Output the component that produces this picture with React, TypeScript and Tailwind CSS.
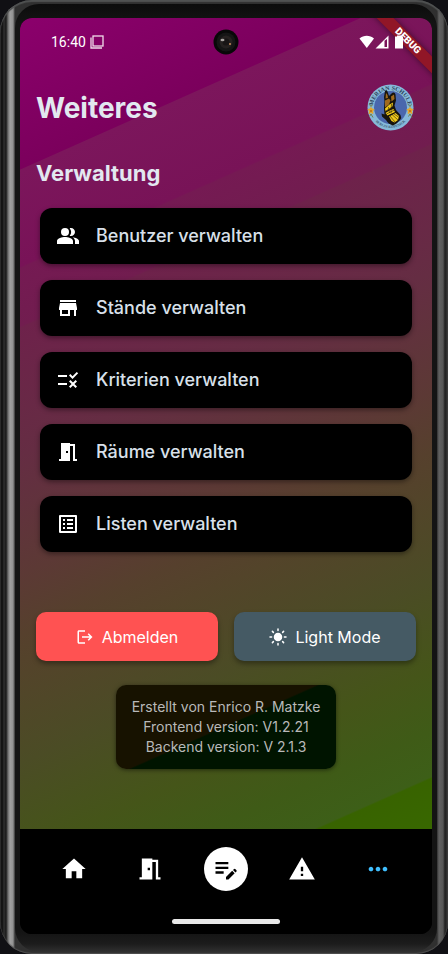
import type { ReactNode } from "react";
import {
  MdEditNote,
  MdHome,
  MdListAlt,
  MdLogout,
  MdMeetingRoom,
  MdMoreHoriz,
  MdPeopleAlt,
  MdRule,
  MdStore,
  MdWarning,
} from "react-icons/md";

const adminEntries: { label: string; icon: ReactNode }[] = [
  { label: "Benutzer verwalten", icon: <MdPeopleAlt size={24} /> },
  { label: "Stände verwalten", icon: <MdStore size={24} /> },
  { label: "Kriterien verwalten", icon: <MdRule size={24} /> },
  { label: "Räume verwalten", icon: <MdMeetingRoom size={24} /> },
  { label: "Listen verwalten", icon: <MdListAlt size={24} /> },
];

function StatusBar() {
  return (
    <div className="relative z-10 grid h-12 grid-cols-3 items-center">
      <div className="flex items-center gap-1 pl-[31px] font-['Roboto',sans-serif] text-sm text-white">
        <span>16:40</span>
        <svg width="14" height="14" viewBox="0 0 14 14" fill="none" stroke="#f0dcea" aria-hidden="true">
          <rect x="3" y="1" width="10" height="10" strokeWidth="1.3" />
          <path d="M1 2.5V13H12" strokeWidth="1.3" />
        </svg>
      </div>
      <svg className="justify-self-center" width="26" height="26" viewBox="0 0 26 26" aria-hidden="true">
        <circle cx="13" cy="13" r="12.5" fill="#080808" />
        <circle cx="13" cy="13" r="9.5" fill="#151515" />
        <circle cx="13" cy="13" r="6.5" fill="#252120" />
        <circle cx="13" cy="13" r="3.5" fill="#181515" />
        <ellipse cx="9.5" cy="11" rx="2" ry="1.2" fill="#a9a5a2" />
        <circle cx="17" cy="15" r="1" fill="#c58d5b" />
      </svg>
      <svg className="mr-7 justify-self-end" width="45" height="16" viewBox="0 0 45 16" fill="#fff" aria-hidden="true">
        <path d="M.5 4.5C4.7.9 10.8.9 15 4.5L7.8 14z" />
        <path d="M16.5 14.5 29.5 1.5v13z M25.5 6.8v6.2h2.5V5z" fillRule="evenodd" />
        <path d="M36 2.5h2V1.500h4v1h2v12h-8z" />
      </svg>
    </div>
  );
}

function DebugRibbon() {
  return (
    <div className="absolute -right-6 top-[17px] flex h-3 w-24 rotate-45 items-center justify-center bg-[#911627] font-['Roboto',sans-serif] text-[10px] font-black leading-3 text-white shadow-[0_0_6px_rgba(0,0,0,0.5)]">
      DEBUG
    </div>
  );
}

function SchoolLogo() {
  return (
    <svg className="mr-0.5" width="47" height="47" viewBox="0 0 94 94" role="img" aria-label="Merian Schule">
      <defs>
        <path id="logo-top" d="M12 47a35 35 0 0 1 70 0" />
        <path id="logo-bottom" d="M6 47a41 41 0 0 0 82 0" />
      </defs>
      <circle cx="47" cy="47" r="46" fill="#86b9d9" />
      <circle cx="47" cy="47" r="33" fill="#4a67ad" />
      <text fontFamily="Liberation Serif, serif" fontSize="12" fontWeight="700" fill="#2c4358" textAnchor="middle">
        <textPath href="#logo-top" startOffset="50%">MERIAN SCHULE</textPath>
      </text>
      <text fontFamily="Liberation Serif, serif" fontSize="7" fontWeight="700" fill="#3c5a72" textAnchor="middle">
        <textPath href="#logo-bottom" startOffset="50%">BERLIN-KÖPENICK</textPath>
      </text>
      {[8, 86].map((x) => (
        <g key={x}>
          <path d={`M${x - 3} 41l3 4 3-4M${x - 3} 65l3-5 4 7`} stroke="#6f7f49" strokeWidth="2" fill="none" />
          <path d={`M${x} 47l2 3 4 1-3 3 1 5-4-2-4 2 1-5-3-3 4-1z`} fill="#e7a528" stroke="#e7a528" strokeWidth="2" />
          <circle cx={x} cy="54" r="2" fill="#b56a16" />
        </g>
      ))}
      <path d="M36 14q3-3 5 1l3 9 4-4q7-6 9 1l1 12-3 10 3 9 9 10q3 5-1 10l-7 7-7 4q-10-3-14-11l-8-7-1-6 6 2-1-12 1-14-1-9z" fill="#17140d" />
      <path d="M38 18l3 4 1 6-5 1zM36 33l8-4 3 4-3 8-8 6zM48 25l6-4 1 9-6 5z" fill="#a06a1e" />
      <path d="M36 49l9-8 7-4-1 8-6 5-8 5zM37 58l8-5 8-3 3 6-9 4-6 3zM44 65l6-3 7-4 7 6-2 8-7 5-6-3z" fill="#f0c91b" />
      <path d="M36 55l16-10M39 60l16-8M46 64l10 12M50 61l12 11M43 46l2 12M49 40l-1 18M54 60l9 6" stroke="#27200b" strokeWidth="1.2" />
    </svg>
  );
}

function SunIcon() {
  return (
    <svg width="18" height="18" viewBox="0 0 18 18" fill="#fff" stroke="#fff" strokeWidth="1.5" strokeLinecap="round" aria-hidden="true">
      <circle cx="9" cy="9" r="3.5" />
      <path d="M9 1v1.600M9 15.400V17M1 9h1.600M15.400 9H17M3.400 3.400l1 1M13.600 13.600l1 1M3.400 14.600l1-1M13.600 4.400l1-1" />
    </svg>
  );
}

function NavItem({ label, children }: { label: string; children: ReactNode }) {
  return (
    <button type="button" aria-label={label} className="flex h-11 flex-1 items-center justify-center text-white">
      {children}
    </button>
  );
}

export default function App() {
  return (
    <div className="min-h-screen bg-[#101014] font-['Inter',sans-serif]">
      <div className="flex min-h-screen flex-col rounded-[32px] bg-[linear-gradient(90deg,#2b2b2b_0,#0c0c0c_2px,#303030_4px,#181818_6px,#6e6e6e_8px,#a0a0a0_10px,#929292_13px,#303030_15px,#303030_calc(100%-11px),#616161_calc(100%-9px),#565656_calc(100%-5px),#202020_calc(100%-3px),#3a3a3a_100%)] pb-0.5 pl-[15px] pr-[11px] pt-1 shadow-[inset_0_2px_1px_#505252,inset_0_-1px_1px_#505050]">
        <div className="flex flex-1 flex-col rounded-[24px] bg-[linear-gradient(180deg,#0c0c0c_0,#141414_20px,#141414_calc(100%-20px),#1c1c1c_calc(100%-8px),#303030_100%)] pb-[18px] pl-[5px] pr-[5px] pt-3.5">
          <div className="relative flex flex-1 flex-col overflow-hidden rounded-xl bg-black">
            <div className="flex flex-1 flex-col bg-[linear-gradient(156deg,#8b006c_0%,#7b005c_15.2%,#7c165c_15.3%,#781357_25%,#751a53_25.2%,#711d4f_31%,#6e224b_31.2%,#652d43_44%,#5c3935_56%,#56402d_62%,#53442a_66%,#4b4c25_75%,#455519_84%,#3f5b17_90%,#3d5f18_94.7%,#386300_94.9%,#386800_100%)]">
              <DebugRibbon />
              <StatusBar />
              <header className="flex h-[83px] items-center justify-between px-4">
                <h1 className="text-[28px] font-bold leading-9 text-[#e2e8f0]">Weiteres</h1>
                <SchoolLogo />
              </header>
              <main className="flex flex-1 flex-col px-4 pb-6">
                <h2 className="text-[22px] font-bold leading-[48px] text-[#e2e8f0]">Verwaltung</h2>
                <ul className="mx-1 mt-[11px] flex flex-col gap-4">
                  {adminEntries.map((entry) => (
                    <li key={entry.label}>
                      <button
                        type="button"
                        className="flex h-14 w-full items-center gap-4 rounded-xl bg-black px-4 text-left text-lg font-medium text-[#d9e0ea] shadow-[0_2px_5px_rgba(0,0,0,0.4)]"
                      >
                        <span className="text-white">{entry.icon}</span>
                        {entry.label}
                      </button>
                    </li>
                  ))}
                </ul>
                <div className="mt-[60px] flex gap-4">
                  <button
                    type="button"
                    className="flex h-[49px] flex-1 items-center justify-center gap-2 rounded-[10px] bg-[#ff5252] text-base text-white shadow-[0_3px_5px_rgba(0,0,0,0.35)]"
                  >
                    <MdLogout size={18} />
                    Abmelden
                  </button>
                  <button
                    type="button"
                    className="flex h-[49px] flex-1 items-center justify-center gap-2 rounded-[10px] bg-[#455a64] text-base text-white shadow-[0_3px_5px_rgba(0,0,0,0.35)]"
                  >
                    <SunIcon />
                    Light Mode
                  </button>
                </div>
                <div className="mt-6 self-center rounded-[10px] bg-[linear-gradient(156deg,#171200_0%,#171200_49%,#001400_50%,#001400_100%)] px-4 py-3 text-center text-sm text-[#b9b9b9] shadow-[0_1px_4px_rgba(0,0,0,0.5)]">
                  <p>Erstellt von Enrico R. Matzke</p>
                  <p>Frontend version: V1.2.21</p>
                  <p>Backend version: V 2.1.3</p>
                </div>
              </main>
            </div>
            <div className="flex flex-col items-center bg-black pb-2.5 pt-[18px]">
              <nav className="flex w-full px-4">
                <NavItem label="Start"><MdHome size={28} /></NavItem>
                <NavItem label="Räume"><MdMeetingRoom size={28} /></NavItem>
                <NavItem label="Bewerten">
                  <span className="flex size-11 items-center justify-center rounded-full bg-white text-black">
                    <MdEditNote size={28} />
                  </span>
                </NavItem>
                <NavItem label="Warnungen"><MdWarning size={28} /></NavItem>
                <NavItem label="Weiteres"><MdMoreHoriz size={28} className="text-[#40bfff]" /></NavItem>
              </nav>
              <div className="mt-7 h-[5px] w-[108px] rounded-full bg-[#e8e8e8]" />
            </div>
          </div>
        </div>
      </div>
    </div>
  );
}
